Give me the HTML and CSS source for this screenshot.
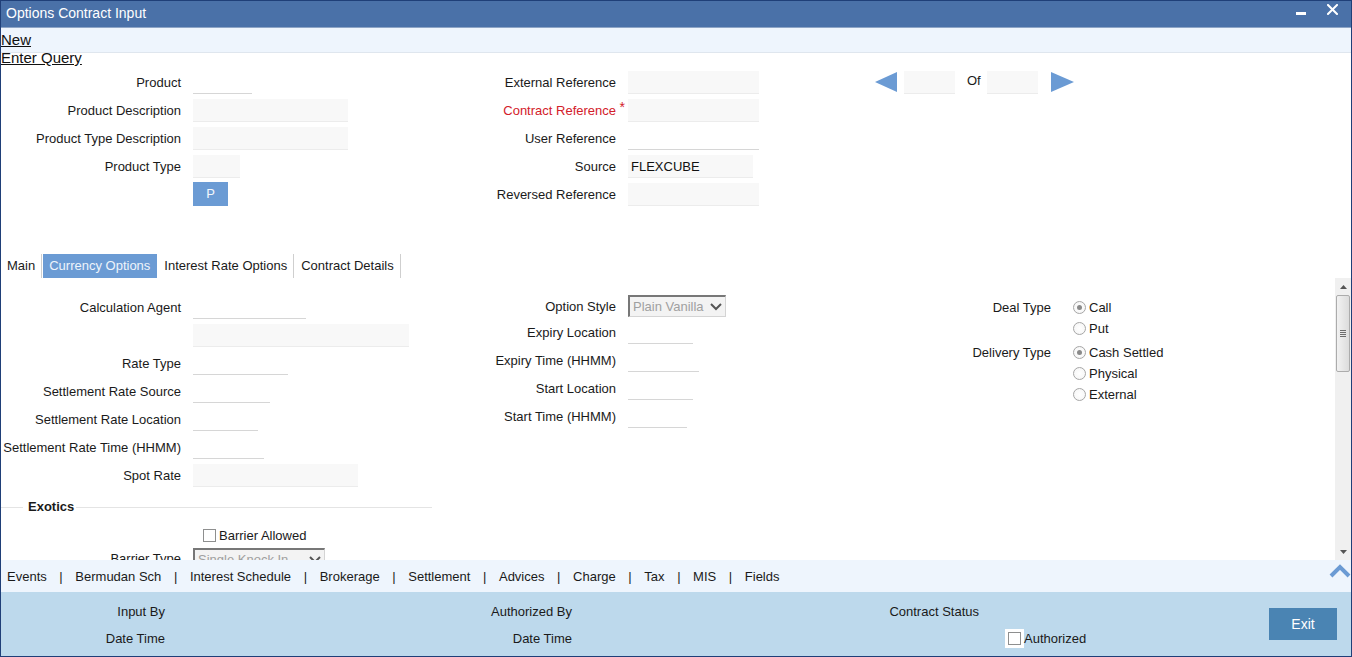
FILE: index.html
```html
<!DOCTYPE html>
<html lang="en">
<head>
<meta charset="utf-8">
<title>Options Contract Input</title>
<link rel="stylesheet" href="styles.css">
</head>
<body>
<div class="window">
  <header class="titlebar">
    <span class="title">Options Contract Input</span>
    <div class="win-ctrls">
      <svg class="ic-min" width="10" height="11" viewBox="0 0 10 11"><rect x="0" y="8" width="10" height="3" fill="#fff"/></svg>
      <svg class="ic-close" width="11" height="11" viewBox="0 0 11 11"><path d="M1 1L10 10M10 1L1 10" stroke="#fff" stroke-width="2" stroke-linecap="square"/></svg>
    </div>
  </header>

  <nav class="toolbar">
    <a class="tlink">New</a>
    <a class="tlink">Enter Query</a>
  </nav>

  <section class="head">
    <div class="hcol hcol-a">
      <div class="row"><span class="lbl">Product</span><span class="fld line w59"></span></div>
      <div class="row"><span class="lbl">Product Description</span><span class="fld box w155"></span></div>
      <div class="row"><span class="lbl">Product Type Description</span><span class="fld box w155"></span></div>
      <div class="row"><span class="lbl">Product Type</span><span class="fld box w47"></span></div>
      <div class="row"><span class="lbl"></span><span class="pbtn">P</span></div>
    </div>
    <div class="hcol hcol-b">
      <div class="row"><span class="lbl">External Reference</span><span class="fld box w131"></span></div>
      <div class="row"><span class="lbl req">Contract Reference</span><span class="fld box w131"></span></div>
      <div class="row"><span class="lbl">User Reference</span><span class="fld line w131"></span></div>
      <div class="row"><span class="lbl">Source</span><span class="fld box w125 val">FLEXCUBE</span></div>
      <div class="row"><span class="lbl">Reversed Reference</span><span class="fld box w131"></span></div>
    </div>
    <div class="pager">
      <svg class="tri-l" width="22" height="20" viewBox="0 0 22 20"><polygon points="0,10 22,0 22,20" fill="#6b9bd4"/></svg>
      <span class="fld box w51 pg1"></span>
      <span class="of">Of</span>
      <span class="fld box w51 pg2"></span>
      <svg class="tri-r" width="23" height="20" viewBox="0 0 23 20"><polygon points="0,0 23,10 0,20" fill="#6b9bd4"/></svg>
    </div>
  </section>

  <div class="tabs">
    <span class="tab">Main</span>
    <span class="tab active">Currency Options</span>
    <span class="tab">Interest Rate Options</span>
    <span class="tab">Contract Details</span>
  </div>

  <div class="scrollwrap">
    <div class="scroll-content">
      <div class="sc-a">
        <div class="row"><span class="lbl">Calculation Agent</span><span class="fld line w113"></span></div>
        <div class="row"><span class="lbl"></span><span class="fld box w216"></span></div>
        <div class="row"><span class="lbl">Rate Type</span><span class="fld line w95"></span></div>
        <div class="row"><span class="lbl">Settlement Rate Source</span><span class="fld line w77"></span></div>
        <div class="row"><span class="lbl">Settlement Rate Location</span><span class="fld line w65"></span></div>
        <div class="row"><span class="lbl">Settlement Rate Time (HHMM)</span><span class="fld line w71"></span></div>
        <div class="row"><span class="lbl">Spot Rate</span><span class="fld box w165"></span></div>
        <div class="legend"><span class="legend-text">Exotics</span></div>
        <div class="chkrow"><span class="chk"></span><span>Barrier Allowed</span></div>
        <div class="row selrow"><span class="lbl">Barrier Type</span>
          <span class="select w132"><span>Single Knock In</span>
            <svg width="12" height="8" viewBox="0 0 12 8"><path d="M1 1L6 6L11 1" fill="none" stroke="#555" stroke-width="2"/></svg>
          </span>
        </div>
      </div>
      <div class="sc-b">
        <div class="row selrow"><span class="lbl">Option Style</span>
          <span class="select w98"><span>Plain Vanilla</span>
            <svg width="12" height="8" viewBox="0 0 12 8"><path d="M1 1L6 6L11 1" fill="none" stroke="#555" stroke-width="2"/></svg>
          </span>
        </div>
        <div class="row"><span class="lbl">Expiry Location</span><span class="fld line w65"></span></div>
        <div class="row"><span class="lbl">Expiry Time (HHMM)</span><span class="fld line w71"></span></div>
        <div class="row"><span class="lbl">Start Location</span><span class="fld line w65"></span></div>
        <div class="row"><span class="lbl">Start Time (HHMM)</span><span class="fld line w59"></span></div>
      </div>
      <div class="sc-c">
        <div class="rrow deal">
          <span class="rlbl">Deal Type</span>
          <div class="radios">
            <span class="ropt"><span class="radio on"></span>Call</span>
            <span class="ropt"><span class="radio"></span>Put</span>
          </div>
        </div>
        <div class="rrow delivery">
          <span class="rlbl">Delivery Type</span>
          <div class="radios">
            <span class="ropt"><span class="radio on"></span>Cash Settled</span>
            <span class="ropt"><span class="radio"></span>Physical</span>
            <span class="ropt"><span class="radio"></span>External</span>
          </div>
        </div>
      </div>
    </div>
    <div class="vscroll">
      <div class="vs-btn"><svg width="7" height="4" viewBox="0 0 7 4"><polygon points="0,4 3.5,0 7,4" fill="#555"/></svg></div>
      <div class="vs-thumb"><span class="grip"></span><span class="grip"></span><span class="grip"></span><span class="grip"></span></div>
      <div class="vs-track"></div>
      <div class="vs-btn"><svg width="7" height="4" viewBox="0 0 7 4"><polygon points="0,0 7,0 3.5,4" fill="#555"/></svg></div>
    </div>
  </div>

  <div class="linkbar">
    <span class="blink">Events</span><span class="sep">|</span>
    <span class="blink">Bermudan Sch</span><span class="sep">|</span>
    <span class="blink">Interest Schedule</span><span class="sep">|</span>
    <span class="blink">Brokerage</span><span class="sep">|</span>
    <span class="blink">Settlement</span><span class="sep">|</span>
    <span class="blink">Advices</span><span class="sep">|</span>
    <span class="blink">Charge</span><span class="sep">|</span>
    <span class="blink">Tax</span><span class="sep">|</span>
    <span class="blink">MIS</span><span class="sep">|</span>
    <span class="blink">Fields</span>
    <svg class="chev" width="22" height="14" viewBox="0 0 22 14"><path d="M2 12L11 3L20 12" fill="none" stroke="#6b9bd4" stroke-width="4"/></svg>
  </div>

  <footer class="audit">
    <span class="a1">Input By</span>
    <span class="a2">Authorized By</span>
    <span class="a3">Contract Status</span>
    <span class="a4"></span>
    <span class="exit">Exit</span>
    <span class="a1">Date Time</span>
    <span class="a2">Date Time</span>
    <span class="a3"></span>
    <span class="a4"><span class="chkwrap"><span class="chk"></span></span>Authorized</span>
  </footer>
</div>
</body>
</html>
```

FILE: styles.css
```css
html, body {
  margin: 0;
  padding: 0;
  background: #ffffff;
}
body {
  font-family: "Liberation Sans", Arial, sans-serif;
  font-size: 13px;
  color: #1a1a1a;
}
.window {
  width: 1352px;
  height: 657px;
  box-sizing: border-box;
  border: 1px solid #1f3f78;
  display: flex;
  flex-direction: column;
  overflow: hidden;
  background: #fff;
}

/* title bar */
.titlebar {
  height: 27px;
  box-sizing: border-box;
  background: #4a71a8;
  border-bottom: 1px solid #8ea5c6;
  display: flex;
  align-items: flex-start;
  flex: none;
}
.title {
  color: #fff;
  font-size: 14px;
  line-height: 25px;
  padding-left: 5px;
}
.win-ctrls {
  margin-left: auto;
  display: flex;
  align-items: flex-start;
  gap: 21px;
  padding-top: 3px;
  padding-right: 13px;
}

/* toolbar */
.toolbar {
  height: 25px;
  box-sizing: border-box;
  background: #eef5fd;
  border-bottom: 1px solid #dfe6ee;
  padding-top: 3px;
  flex: none;
  position: relative;
  z-index: 1;
}
.tlink {
  display: block;
  width: max-content;
  font-size: 15px;
  line-height: 18px;
  color: #111;
  text-decoration: underline;
}

/* header form */
.head {
  display: flex;
  padding-top: 18px;
  flex: none;
}
.row {
  display: flex;
  align-items: flex-start;
  height: 28px;
}
.lbl {
  flex: none;
  text-align: right;
  line-height: 23px;
  margin-right: 12px;
  white-space: nowrap;
}
.hcol-a { width: 419px; }
.hcol-a .lbl { width: 180px; }
.hcol-b { width: 455px; }
.hcol-b .lbl { width: 196px; }

.req {
  color: #d3202a;
  position: relative;
}
.req::after {
  content: "*";
  position: absolute;
  right: -9px;
  top: -3px;
  color: #d3202a;
  font-size: 14px;
}

.fld {
  display: block;
  height: 23px;
  box-sizing: border-box;
  flex: none;
}
.fld.line {
  border-bottom: 1px solid #d6d6d6;
}
.fld.box {
  background: #f8f8f8;
  border-bottom: 1px solid #ececec;
}
.fld.val {
  line-height: 23px;
  padding-left: 3px;
  color: #111;
}
.w47 { width: 47px; }
.w51 { width: 51px; }
.w59 { width: 59px; }
.w65 { width: 65px; }
.w71 { width: 71px; }
.w77 { width: 77px; }
.w95 { width: 95px; }
.w98 { width: 98px; }
.w113 { width: 113px; }
.w125 { width: 125px; }
.w131 { width: 131px; }
.w132 { width: 132px; }
.w155 { width: 155px; }
.w165 { width: 165px; }
.w216 { width: 216px; }

.pbtn {
  display: block;
  width: 35px;
  height: 24px;
  margin-top: -1px;
  background: #6b9bd4;
  color: #f4f8fd;
  text-align: center;
  line-height: 24px;
  font-size: 13px;
}

.pager {
  display: flex;
  align-items: flex-start;
}
.tri-l { margin-top: 1px; }
.pg1 { margin-left: 7px; }
.of {
  margin-left: 12px;
  line-height: 19px;
  width: 14px;
}
.pg2 { margin-left: 6px; }
.tri-r { margin-left: 13px; margin-top: 1px; }

/* tabs */
.tabs {
  display: flex;
  height: 24px;
  margin-top: 43px;
  flex: none;
}
.tab {
  line-height: 24px;
  padding: 0 6px 0 7px;
  border-right: 1px solid #cfcfcf;
  white-space: nowrap;
}
.tab:first-child { padding-left: 6px; }
.tab.active {
  background: #6b9bd4;
  color: #eef4fb;
  margin-left: 1px;
  border-right-color: #6b9bd4;
  padding: 0 6px;
}

/* scroll area */
.scrollwrap {
  display: flex;
  height: 282px;
  flex: none;
}
.scroll-content {
  flex: 1;
  display: flex;
  overflow: hidden;
  padding-top: 18px;
  box-sizing: border-box;
}
.sc-a { width: 439px; flex: none; }
.sc-a .lbl { width: 180px; }
.sc-b { width: 440px; flex: none; }
.sc-b .lbl { width: 176px; }
.sc-c { flex: none; }

.selrow .lbl { line-height: 22px; }
.sc-b .selrow { height: 25px; }
.sc-b .selrow .select { margin-top: -1px; }

.select {
  display: flex;
  align-items: center;
  justify-content: space-between;
  height: 22px;
  box-sizing: border-box;
  border-style: solid;
  border-width: 2px 1px 1px 2px;
  border-color: #777 #d4d4d4 #d4d4d4 #777;
  background: #f3f3f3;
  color: #a0a0a0;
  padding: 0 3px 0 3px;
  white-space: nowrap;
  flex: none;
}

.legend {
  display: flex;
  align-items: center;
  width: 431px;
  height: 16px;
  margin-top: 7px;
}
.legend::before {
  content: "";
  width: 22px;
  border-top: 1px solid #e4e4e4;
}
.legend::after {
  content: "";
  flex: 1;
  margin-left: 2px;
  border-top: 1px solid #e4e4e4;
}
.legend-text {
  font-weight: bold;
  padding: 0 0 0 5px;
  line-height: 16px;
}

.chkrow {
  display: flex;
  align-items: center;
  height: 20px;
  margin-top: 10px;
  padding-left: 202px;
}
.chk {
  display: inline-block;
  width: 13px;
  height: 13px;
  box-sizing: border-box;
  border: 1px solid #8e8f8f;
  background: #fff;
  margin-right: 3px;
  flex: none;
}
.sc-a .selrow { margin-top: 3px; }

.rrow {
  display: flex;
  align-items: flex-start;
}
.rrow.deal { height: 43px; padding-top: 1px; box-sizing: border-box; }
.rrow.delivery { padding-top: 3px; }
.rlbl {
  width: 171px;
  text-align: right;
  line-height: 21px;
  margin-right: 22px;
  white-space: nowrap;
}
.radios {
  display: flex;
  flex-direction: column;
}
.ropt {
  display: flex;
  align-items: center;
  line-height: 21px;
  height: 21px;
}
.radio {
  width: 13px;
  height: 13px;
  box-sizing: border-box;
  border-radius: 50%;
  border: 1px solid #a6a6a6;
  background: radial-gradient(circle, #ffffff 0%, #f4f4f4 100%);
  margin-right: 3px;
  display: flex;
  align-items: center;
  justify-content: center;
}
.radio.on::after {
  content: "";
  width: 5px;
  height: 5px;
  border-radius: 50%;
  background: #8a8a8a;
}

.vscroll {
  width: 16px;
  flex: none;
  background: #f0f0f0;
  display: flex;
  flex-direction: column;
  align-items: center;
}
.vs-btn {
  height: 17px;
  width: 16px;
  display: flex;
  align-items: center;
  justify-content: center;
  flex: none;
}
.vs-thumb {
  width: 14px;
  height: 77px;
  box-sizing: border-box;
  border: 1px solid #acacac;
  border-radius: 2px;
  background: linear-gradient(to right, #f2f2f2, #dcdcdc);
  display: flex;
  flex-direction: column;
  align-items: center;
  justify-content: center;
  gap: 1px;
  flex: none;
}
.grip {
  width: 6px;
  height: 1px;
  background: #6c6c6c;
}
.vs-track { flex: 1; }

/* link bar */
.linkbar {
  height: 32px;
  background: #eef5fd;
  display: flex;
  align-items: center;
  padding-left: 6px;
  flex: none;
  white-space: nowrap;
}
.sep { margin: 0 12.6px; }
.chev {
  margin-left: auto;
  margin-right: 0;
  align-self: flex-start;
  margin-top: 4px;
}

/* audit footer */
.audit {
  flex: 1;
  background: #bdd9ec;
  display: grid;
  grid-template-columns: 164px 407px 407px 1fr 68px;
  grid-template-rows: 27px 27px;
  padding: 6px 14px 0 0;
  box-sizing: border-box;
  color: #1a1a1a;
}
.a1, .a2, .a3 {
  text-align: right;
  line-height: 27px;
  white-space: nowrap;
}
.a4 {
  display: flex;
  align-items: center;
  padding-left: 26px;
  line-height: 27px;
}
.chkwrap {
  background: #fff;
  padding: 3px;
  display: flex;
}
.chkwrap .chk { margin-right: 0; }
.exit {
  grid-row: 1 / span 2;
  grid-column: 5;
  align-self: start;
  margin-top: 10px;
  height: 32px;
  background: #4a84b3;
  color: #fff;
  font-size: 14px;
  line-height: 32px;
  text-align: center;
}
```
